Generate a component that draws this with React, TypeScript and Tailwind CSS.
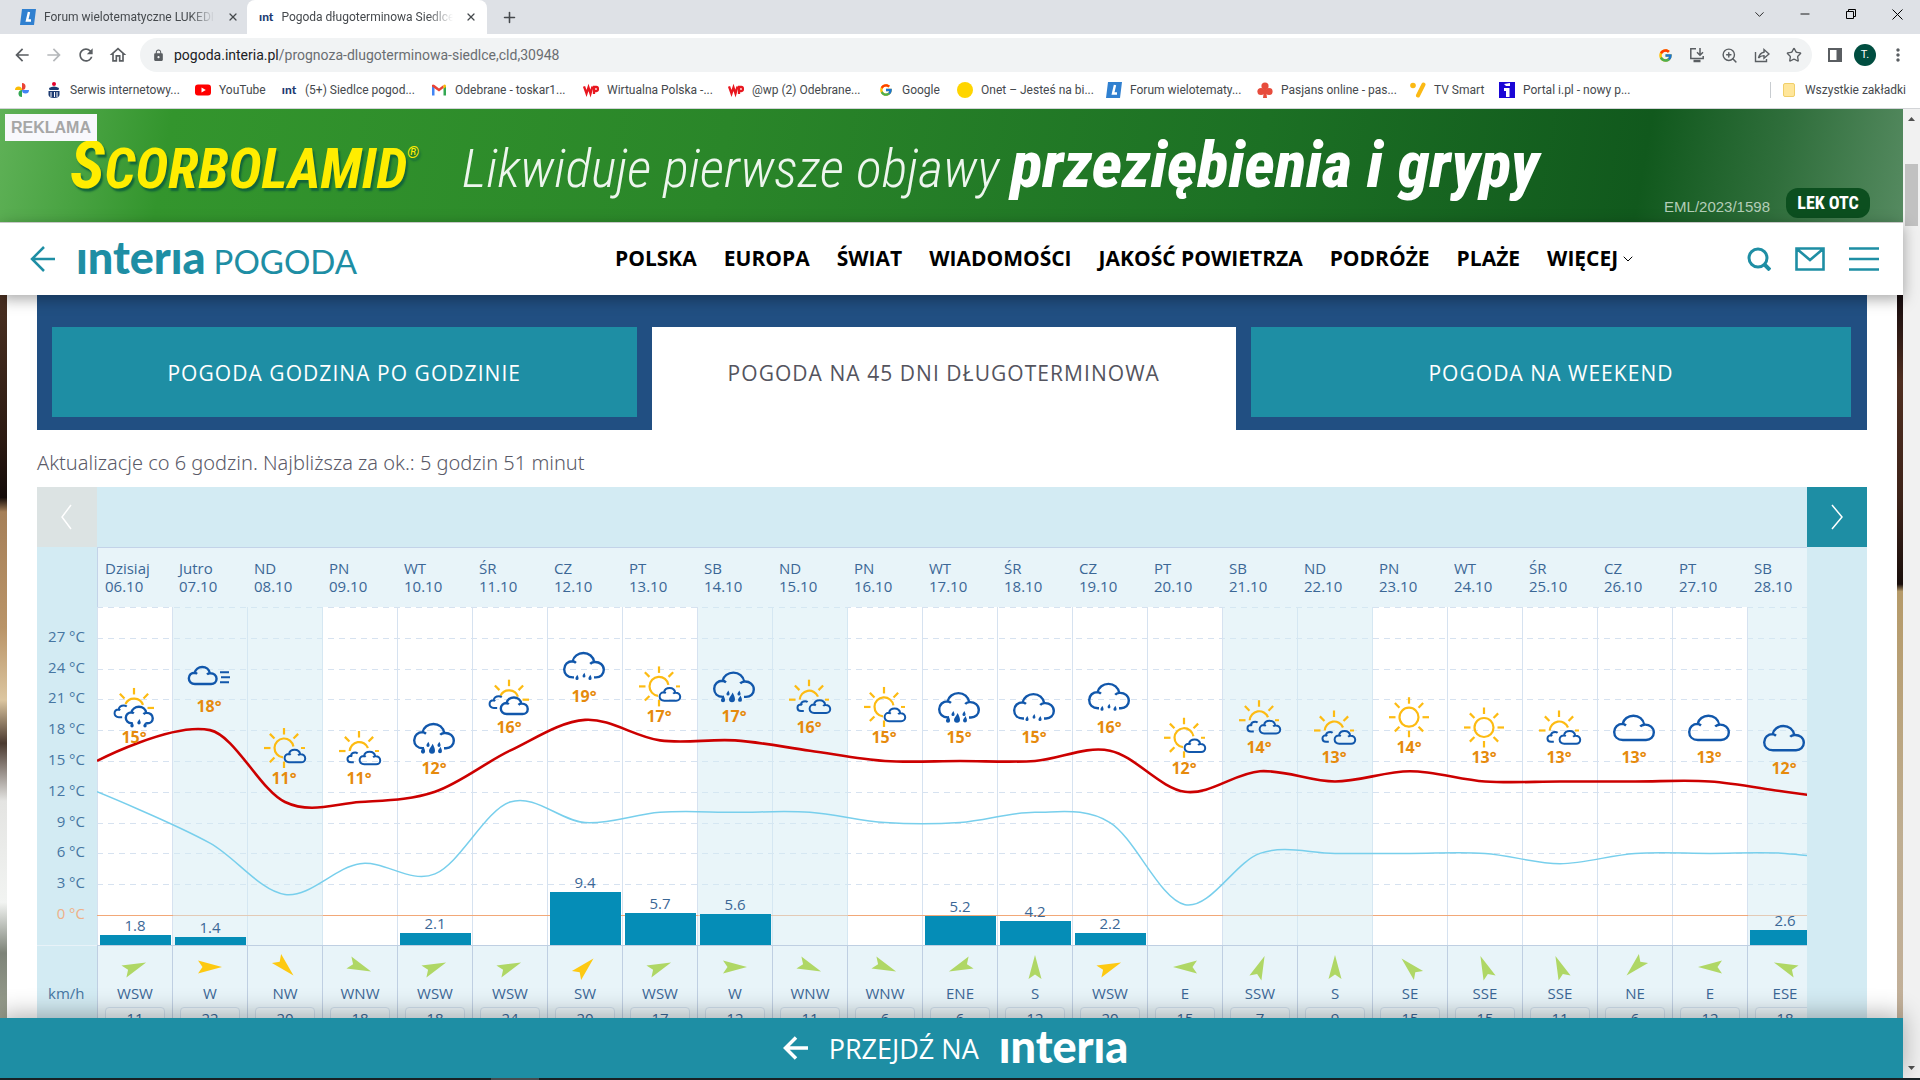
import { ChevronDown, Minus, Plus, Star, X, ZoomIn } from "lucide-react";
import { FcGoogle } from "react-icons/fc";
import { MdArrowBack, MdArrowForward, MdLock, MdMoreVert, MdOutlineHome, MdRefresh } from "react-icons/md";

type IconName =
  | "sun"
  | "sunCloud"
  | "sunSmallClouds"
  | "sunClouds"
  | "sunRain"
  | "cloud"
  | "fog"
  | "rain"
  | "heavyRain";

type Day = {
  name: string;
  date: string;
  icon: IconName;
  high: number;
  low: number;
  rain?: number;
  wind: string;
  speed: number;
  strong?: boolean;
};

const days: Day[] = [
  { name: "Dzisiaj", date: "06.10", icon: "sunRain", high: 15, low: 12, rain: 1.8, wind: "WSW", speed: 11 },
  { name: "Jutro", date: "07.10", icon: "fog", high: 18, low: 7, rain: 1.4, wind: "W", speed: 22, strong: true },
  { name: "ND", date: "08.10", icon: "sunCloud", high: 11, low: 2, wind: "NW", speed: 20, strong: true },
  { name: "PN", date: "09.10", icon: "sunSmallClouds", high: 11, low: 5, wind: "WNW", speed: 18 },
  { name: "WT", date: "10.10", icon: "heavyRain", high: 12, low: 4, rain: 2.1, wind: "WSW", speed: 18 },
  { name: "ŚR", date: "11.10", icon: "sunClouds", high: 16, low: 11, wind: "WSW", speed: 24 },
  { name: "CZ", date: "12.10", icon: "rain", high: 19, low: 9, rain: 9.4, wind: "SW", speed: 20, strong: true },
  { name: "PT", date: "13.10", icon: "sunCloud", high: 17, low: 10, rain: 5.7, wind: "WSW", speed: 17 },
  { name: "SB", date: "14.10", icon: "heavyRain", high: 17, low: 10, rain: 5.6, wind: "W", speed: 12 },
  { name: "ND", date: "15.10", icon: "sunSmallClouds", high: 16, low: 10, wind: "WNW", speed: 11 },
  { name: "PN", date: "16.10", icon: "sunCloud", high: 15, low: 9, wind: "WNW", speed: 6 },
  { name: "WT", date: "17.10", icon: "heavyRain", high: 15, low: 9, rain: 5.2, wind: "ENE", speed: 6 },
  { name: "ŚR", date: "18.10", icon: "rain", high: 15, low: 10, rain: 4.2, wind: "S", speed: 12 },
  { name: "CZ", date: "19.10", icon: "rain", high: 16, low: 9, rain: 2.2, wind: "WSW", speed: 20, strong: true },
  { name: "PT", date: "20.10", icon: "sunCloud", high: 12, low: 1, wind: "E", speed: 15 },
  { name: "SB", date: "21.10", icon: "sunSmallClouds", high: 14, low: 6, wind: "SSW", speed: 7 },
  { name: "ND", date: "22.10", icon: "sunSmallClouds", high: 13, low: 6, wind: "S", speed: 9 },
  { name: "PN", date: "23.10", icon: "sun", high: 14, low: 6, wind: "SE", speed: 15 },
  { name: "WT", date: "24.10", icon: "sun", high: 13, low: 6, wind: "SSE", speed: 15 },
  { name: "ŚR", date: "25.10", icon: "sunSmallClouds", high: 13, low: 5, wind: "SSE", speed: 11 },
  { name: "CZ", date: "26.10", icon: "cloud", high: 13, low: 6, wind: "NE", speed: 6 },
  { name: "PT", date: "27.10", icon: "cloud", high: 13, low: 6, wind: "E", speed: 12 },
  { name: "SB", date: "28.10", icon: "cloud", high: 12, low: 6, rain: 2.6, wind: "ESE", speed: 18 },
];

const windAngle: Record<string, number> = {
  S: 0, SSW: 22.5, SW: 45, WSW: 67.5, W: 90, WNW: 112.5, NW: 135,
  NE: 225, ENE: 247.5, E: 270, ESE: 292.5, SE: 315, SSE: 337.5,
};

const COL = 75;
const PLOT_W = COL * days.length;
const PLOT_H = 338;
const ZERO_Y = 308;
const DEGREE = 10.27;
const ticks = [27, 24, 21, 18, 15, 12, 9, 6, 3, 0];

const tempY = (t: number) => ZERO_Y - t * DEGREE;
const isWeekend = (day: Day, i: number) => day.name === "SB" || day.name === "ND" || i === 1;

type Point = { x: number; y: number };

function spline(points: Point[]) {
  let d = `M${points[0].x} ${points[0].y}`;
  let right: Point = points[0];
  for (let i = 1; i < points.length; i++) {
    const prev = points[i - 1];
    const cur = points[i];
    const next = points[i + 1];
    let left = cur;
    let nextRight = cur;
    if (next) {
      const lx = (2 * cur.x + prev.x) / 3;
      const ly = (2 * cur.y + prev.y) / 3;
      const rx = (2 * cur.x + next.x) / 3;
      const ry = (2 * cur.y + next.y) / 3;
      // shift both handles so they stay in line with the point
      const fix = ((ry - ly) * (rx - cur.x)) / (rx - lx) + cur.y - ry;
      left = { x: lx, y: ly + fix };
      nextRight = { x: rx, y: ry + fix };
    }
    d += ` C${right.x} ${right.y} ${left.x} ${left.y} ${cur.x} ${cur.y}`;
    right = nextRight;
  }
  return d;
}

function series(key: "high" | "low", last: number) {
  const points = days.map((day, i) => ({
    x: i === 0 ? 0 : COL * i + 38,
    y: tempY(day[key]),
  }));
  points.push({ x: COL * days.length + 38, y: tempY(last) });
  return spline(points);
}

const CLOUD =
  "M10 25.5C4.5 25.5 1.2 22 1.2 17.4C1.2 12.5 5 9.4 9.6 9.4C10.6 4.6 15 1.2 20.4 1.2C26 1.2 30.4 4.8 31.2 10.2C36.8 9.8 40.8 13.2 40.8 18C40.8 22.4 37.4 25.5 33 25.5Z M9.6 9.4Q11.4 9.6 13 11 M31.2 10.2Q28.6 10.4 27.2 12";
const OPEN_CLOUD =
  "M11 25.5H10C4.5 25.5 1.2 22 1.2 17.4C1.2 12.5 5 9.4 9.6 9.4C10.6 4.6 15 1.2 20.4 1.2C26 1.2 30.4 4.8 31.2 10.2C36.8 9.8 40.8 13.2 40.8 18C40.8 22.4 37.4 25.5 33 25.5H31 M9.6 9.4Q11.4 9.6 13 11 M31.2 10.2Q28.6 10.4 27.2 12";
const HALF_CLOUD =
  "M17 25.5H10C4.5 25.5 1.2 22 1.2 17.4C1.2 12.5 5 9.4 9.6 9.4C10.6 4.6 15 1.2 20.4 1.2Q24 1.2 26.6 3.4 M9.6 9.4Q11.4 9.6 13 11";

function Cloud({ x, y, scale = 1, d = CLOUD }: { x: number; y: number; scale?: number; d?: string }) {
  return (
    <path
      d={d}
      transform={`translate(${x} ${y}) scale(${scale})`}
      vectorEffect="non-scaling-stroke"
      fill="none"
      stroke="#1157ab"
      strokeWidth={scale < 0.6 ? 2 : 2.4}
    />
  );
}

function Drop({ x, y, size }: { x: number; y: number; size: number }) {
  return (
    <path
      transform={`translate(${x} ${y}) scale(${size})`}
      d="M.3 0C1 1.4 1.3 2.2 1.3 3A1.3 1.3 0 0 1-1.3 3C-1.3 2.1-.4 1.4.3 0Z"
      fill="#1157ab"
    />
  );
}

function Sun({ cy = 0, arc, rays }: { cy?: number; arc?: string; rays: number[] }) {
  return (
    <g transform={`translate(0 ${cy})`} fill="none" stroke="#fdbb12" strokeWidth="2.2">
      {arc ? <path d={arc} /> : <circle r="9.5" />}
      {rays.map((a) => (
        <path key={a} d="M0-13.5V-20" transform={`rotate(${a})`} />
      ))}
    </g>
  );
}

function WeatherIcon({ name }: { name: IconName }) {
  switch (name) {
    case "sun":
      return <Sun rays={[0, 45, 90, 135, 180, 225, 270, 315]} />;
    case "sunCloud":
      return (
        <>
          <Sun arc="M-1 9.4A9.5 9.5 0 1 1 9.4-1.5" rays={[0, 45, 180, 225, 270, 315]} />
          <path d="M17 0H21" stroke="#fdbb12" strokeWidth="2" />
          <Cloud x={0} y={1} scale={0.52} />
        </>
      );
    case "sunSmallClouds":
      return (
        <>
          <Sun cy={3} arc="M-9.3 0A9.5 9.5 0 0 1 9-3" rays={[0, 45, 270, 315]} />
          <path d="M16 3H20" stroke="#fdbb12" strokeWidth="2" />
          <Cloud x={-12} y={4} scale={0.4} d={HALF_CLOUD} />
          <Cloud x={0} y={3} scale={0.52} />
        </>
      );
    case "sunClouds":
      return (
        <>
          <Sun cy={3} arc="M-8.5-4A9.5 9.5 0 0 1 9-3" rays={[0, 45, 90, 315]} />
          <Cloud x={-20} y={-1} scale={0.48} d={HALF_CLOUD} />
          <Cloud x={-9} y={0} scale={0.68} />
        </>
      );
    case "sunRain":
      return (
        <>
          <Sun cy={1} arc="M-8.5-4A9.5 9.5 0 0 1 9-3" rays={[0, 45, 90, 315]} />
          <Cloud x={-20} y={-2} scale={0.48} d={HALF_CLOUD} />
          <Cloud x={-9} y={-1} scale={0.68} d={OPEN_CLOUD} />
          <Drop x={-2} y={15} size={1.3} />
          <Drop x={5} y={12} size={1.3} />
          <Drop x={11} y={15} size={1.3} />
        </>
      );
    case "fog":
      return (
        <>
          <Cloud x={-21} y={-10} scale={0.7} />
          <path d="M11-4H20 M12 1H21 M11 6H20" stroke="#1157ab" strokeWidth="2" />
        </>
      );
    case "rain":
      return (
        <>
          <Cloud x={-21} y={-14} d={OPEN_CLOUD} />
          <Drop x={-7} y={9} size={1.2} />
          <Drop x={0} y={7} size={1.1} />
          <Drop x={6} y={9} size={1.2} />
        </>
      );
    case "heavyRain":
      return (
        <>
          <Cloud x={-21} y={-15} d={OPEN_CLOUD} />
          <Drop x={-11} y={9} size={1.6} />
          <Drop x={-2} y={6} size={2.3} />
          <Drop x={6} y={9} size={1.5} />
          <Drop x={-6} y={4} size={1.2} />
          <Drop x={5} y={4} size={1.2} />
        </>
      );
    default:
      return <Cloud x={-21} y={-13} />;
  }
}

function Plot() {
  return (
    <svg
      width={PLOT_W}
      height={PLOT_H}
      className="block bg-white font-['Open_Sans',sans-serif]"
      role="img"
      aria-label="Temperatura i opady"
    >
      <g stroke="#d6e2f0">
        {days.map((day, i) => (
          <path key={day.date} d={`M${COL * i + 0.5} 0V${PLOT_H}`} />
        ))}
      </g>
      <g stroke="#d6e2f0" strokeDasharray="6 5">
        <path d={`M0 .5H${PLOT_W}`} />
        {ticks.slice(0, -1).map((t) => (
          <path key={t} d={`M0 ${Math.round(tempY(t)) + 0.5}H${PLOT_W}`} />
        ))}
      </g>
      <path d={`M0 ${ZERO_Y + 0.5}H${PLOT_W}`} stroke="#f2a878" />
      {days.map((day, i) =>
        isWeekend(day, i) ? (
          <rect key={day.date} x={COL * i + 1} y="0" width={COL} height={PLOT_H} fill="#d3ebf3" fillOpacity=".5" />
        ) : null
      )}
      <path d={series("low", 5)} fill="none" stroke="#78cfec" strokeWidth="1.5" />
      {days.map((day, i) =>
        day.rain ? (
          <rect
            key={day.date}
            x={COL * i + 3}
            y={PLOT_H - Math.round(day.rain * 5.6)}
            width="71"
            height={Math.round(day.rain * 5.6)}
            fill="#058db7"
          />
        ) : null
      )}
      <path d={series("high", 11)} fill="none" stroke="#cc0000" strokeWidth="2.6" />
      {days.map((day, i) => (
        <g key={day.date} transform={`translate(${COL * i + 37} ${tempY(day.high)})`}>
          <g transform="translate(0 -54)">
            <WeatherIcon name={day.icon} />
          </g>
          <text y="-18" textAnchor="middle" fontSize="16" fontWeight="700" fill="#e68a0c">
            {day.high}°
          </text>
        </g>
      ))}
      {days.map((day, i) =>
        day.rain ? (
          <text
            key={day.date}
            x={COL * i + 38}
            y={PLOT_H - Math.round(day.rain * 5.6) - 4}
            textAnchor="middle"
            fontSize="15"
            fill="#3b6796"
          >
            {day.rain}
          </text>
        ) : null
      )}
    </svg>
  );
}

function Axis() {
  return (
    <svg width="60" height={PLOT_H} className="block font-['Open_Sans',sans-serif]" aria-hidden="true">
      {ticks.map((t) => (
        <text
          key={t}
          x="48"
          y={Math.round(tempY(t)) + 4}
          textAnchor="end"
          fontSize="15"
          fill={t === 0 ? "#efb087" : "#4676a2"}
        >
          {t} °C
        </text>
      ))}
    </svg>
  );
}

function Forecast() {
  return (
    <section className="flex bg-[#d3ebf3]">
      <div className="w-[60px] shrink-0">
        <button className="flex h-[60px] w-full items-center justify-center bg-[#dce3e3] text-white" aria-label="Poprzednie">
          <svg width="12" height="26" fill="none" stroke="currentColor" strokeWidth="1.5">
            <path d="M10 1L1 13L10 25" />
          </svg>
        </button>
        <div className="h-[60px]" />
        <Axis />
        <div className="border-t border-[#e8f2f8] pt-[35px] pl-[11px] text-[15px] leading-6 text-[#4676a2]">km/h</div>
      </div>
      <div className="min-w-0 flex-1 overflow-hidden">
        <div className="h-[60px]" />
        <table className="w-[1725px] table-fixed border-separate border-spacing-0 text-[#3b6796]">
          <thead>
            <tr className="h-[60px] bg-[#e8f4f9]">
              {days.map((day) => (
                <th
                  key={day.date}
                  className="border-t border-[#c3d3e8] pb-0.5 pl-[7px] text-left align-middle text-[15px] leading-[18px] font-normal first:border-l"
                >
                  {day.name}
                  <br />
                  {day.date}
                </th>
              ))}
            </tr>
          </thead>
          <tbody>
            <tr>
              <td colSpan={days.length} className="p-0">
                <Plot />
              </td>
            </tr>
            <tr className="bg-[#e8f4f9]">
              {days.map((day) => (
                <td key={day.date} className="border-t border-l border-[#bfcfe2] p-0 text-center align-top">
                  <svg width="28" height="28" viewBox="-14 -14 28 28" className="mx-auto mt-[7px]">
                    <path
                      d="M0-12L6.5 12L0 7.5L-6.5 12Z"
                      transform={`rotate(${windAngle[day.wind]})`}
                      fill={day.strong ? "#fdc912" : "#afd765"}
                    />
                  </svg>
                  <div className="text-[15px] leading-6">{day.wind}</div>
                  <div className="mx-[7px] mt-0.5 h-10 rounded border border-[#cfdfec] bg-[#edf6fa] text-[15px] leading-5">
                    {day.speed}
                  </div>
                </td>
              ))}
            </tr>
          </tbody>
        </table>
      </div>
      <div className="w-[60px] shrink-0">
        <button className="flex h-[60px] w-full items-center justify-center bg-[#1e8ea4] text-white" aria-label="Następne">
          <svg width="12" height="26" fill="none" stroke="currentColor" strokeWidth="1.5">
            <path d="M1 1L11 13L1 25" />
          </svg>
        </button>
      </div>
    </section>
  );
}

function IntIcon() {
  return <span className="font-['Lato',sans-serif] text-[12px] leading-4 font-black text-[#1d3b72]">ınt</span>;
}

function ForumIcon() {
  return (
    <svg width="16" height="16" viewBox="0 0 16 16" className="shrink-0">
      <path d="M2 0H16L14 16H0Z" fill="#3080d0" />
      <path d="M9 3L7 11.5H11" fill="none" stroke="#fff" strokeWidth="2.4" />
    </svg>
  );
}

function PhotosIcon() {
  return (
    <svg width="16" height="16" viewBox="0 0 16 16">
      <path d="M8 8V1A3.5 3.5 0 0 1 8 8Z" fill="#ea4335" />
      <path d="M8 8H15A3.5 3.5 0 0 1 8 8Z" fill="#4285f4" />
      <path d="M8 8V15A3.5 3.5 0 0 1 8 8Z" fill="#34a853" />
      <path d="M8 8H1A3.5 3.5 0 0 1 8 8Z" fill="#fbbc04" />
    </svg>
  );
}

function PkoIcon() {
  return (
    <svg width="16" height="16" viewBox="0 0 16 16">
      <circle cx="8" cy="2" r="2" fill="#e4002b" />
      <path d="M3 6Q8 3 13 6L12.5 8H3.5Z M2.5 9H13.5V13Q13 16 8 16T2.5 13Z" fill="#1d3b72" />
      <path d="M5 10V15 M8.5 10V15 M11 10V15" stroke="#fff" />
    </svg>
  );
}

function YoutubeIcon() {
  return (
    <svg width="16" height="16" viewBox="0 0 16 16">
      <rect y="2.5" width="16" height="11" rx="3" fill="#f00" />
      <path d="M6.5 5.5V10.5L10.8 8Z" fill="#fff" />
    </svg>
  );
}

function GmailIcon() {
  return (
    <svg width="16" height="16" viewBox="0 0 16 16">
      <path d="M1 3.5L3.5 5V13.5H1Z" fill="#4285f4" />
      <path d="M15 3.5L12.5 5V13.5H15Z" fill="#34a853" />
      <path d="M1 3Q2 2 3.5 3L8 6.5L12.5 3V6L8 9.5L1 4.5Z" fill="#ea4335" />
      <path d="M12.5 3Q14 2 15 3.5V5L12.5 6.8Z" fill="#fbbc04" />
    </svg>
  );
}

function WpIcon() {
  return (
    <svg width="16" height="16" viewBox="0 0 16 16" fill="none" stroke="#e8171f" strokeWidth="2.3">
      <path d="M1 4.5L3.5 11.5L5.5 5.5L7.5 11.5L9.5 4.5" />
      <path d="M11 12V5H13.5Q15 5 15 7T13.5 9H11" />
    </svg>
  );
}

function ClubIcon() {
  return (
    <svg width="16" height="16" viewBox="0 0 16 16" fill="#e74c3c">
      <circle cx="8" cy="4" r="3.6" />
      <circle cx="4" cy="9.5" r="3.6" />
      <circle cx="12" cy="9.5" r="3.6" />
      <path d="M7.2 6H8.8L10 16H6Z" />
    </svg>
  );
}

function TvIcon() {
  return (
    <svg width="16" height="16" viewBox="0 0 16 16">
      <circle cx="3" cy="3.5" r="2.8" fill="#fbb914" />
      <path d="M13.5 2.5L8 13.5" stroke="#fbb914" strokeWidth="4" strokeLinecap="round" />
    </svg>
  );
}

function PortalIcon() {
  return (
    <svg width="16" height="16" viewBox="0 0 16 16">
      <path d="M0 0H16V16H0Z" fill="#1a06d6" />
      <path d="M5 2L11 1V4H7Z M5 6H10.5V15H7V9H5Z" fill="#fff" />
    </svg>
  );
}

const bookmarks = [
  { label: "Serwis internetowy...", icon: <PkoIcon />, width: "w-[149px]" },
  { label: "YouTube", icon: <YoutubeIcon />, width: "w-[86px]" },
  { label: "(5+) Siedlce pogod...", icon: <IntIcon />, width: "w-[150px]" },
  { label: "Odebrane - toskar1...", icon: <GmailIcon />, width: "w-[152px]" },
  { label: "Wirtualna Polska -...", icon: <WpIcon />, width: "w-[145px]" },
  { label: "@wp (2) Odebrane...", icon: <WpIcon />, width: "w-[150px]" },
  { label: "Google", icon: <FcGoogle size={14} />, width: "w-[79px]" },
  { label: "Onet – Jesteś na bi...", icon: <span className="size-4 rounded-full bg-[#ffd500]" />, width: "w-[149px]" },
  { label: "Forum wielotematy...", icon: <ForumIcon />, width: "w-[151px]" },
  { label: "Pasjans online - pas...", icon: <ClubIcon />, width: "w-[153px]" },
  { label: "TV Smart", icon: <TvIcon />, width: "w-[89px]" },
  { label: "Portal i.pl - nowy p...", icon: <PortalIcon />, width: "w-[150px]" },
];

function BrowserChrome() {
  return (
    <div className="shrink-0 border-b border-[#d2d4d7] bg-white font-['Roboto',sans-serif] text-[12px] text-[#45494d]">
      <div className="flex h-[34px] bg-[#dee1e6]">
        <div className="flex w-[247px] items-center gap-2 pr-2 pl-5">
          <ForumIcon />
          <span className="w-[172px] overflow-hidden mask-r-from-85% whitespace-nowrap">Forum wielotematyczne LUKEDIR</span>
          <button className="ml-1" aria-label="Zamknij kartę">
            <X size={12} strokeWidth={2.5} />
          </button>
        </div>
        <div className="flex w-[240px] items-center gap-2 rounded-t-lg bg-white pr-2 pl-3">
          <IntIcon />
          <span className="w-[172px] overflow-hidden mask-r-from-85% whitespace-nowrap">Pogoda długoterminowa Siedlce</span>
          <button className="ml-1" aria-label="Zamknij kartę">
            <X size={12} strokeWidth={2.5} />
          </button>
        </div>
        <button className="ml-3.5" aria-label="Nowa karta">
          <Plus size={17} strokeWidth={2.2} />
        </button>
        <div className="ml-auto flex h-7 text-black">
          <button className="flex w-[46px] items-center justify-center" aria-label="Szukaj kart">
            <ChevronDown size={15} strokeWidth={1.3} />
          </button>
          <button className="flex w-[46px] items-center justify-center" aria-label="Minimalizuj">
            <Minus size={14} strokeWidth={1.5} />
          </button>
          <button className="flex w-[46px] items-center justify-center" aria-label="Przywróć">
            <svg width="10" height="10" fill="none" stroke="currentColor">
              <path d="M.5 2.5H7.5V9.5H.5Z M2.5 2.5V.5H9.5V7.5H7.5" />
            </svg>
          </button>
          <button className="flex w-[46px] items-center justify-center" aria-label="Zamknij">
            <svg width="11" height="11" fill="none" stroke="currentColor">
              <path d="M.5 .5L10.5 10.5M10.5 .5L.5 10.5" />
            </svg>
          </button>
        </div>
      </div>
      <div className="flex h-[42px] items-center pr-3 pl-3 text-[#5a5e62]">
        <div className="flex w-32 items-center gap-3">
          <button aria-label="Wstecz"><MdArrowBack size={20} /></button>
          <button className="text-[#b5b8bb]" aria-label="Dalej"><MdArrowForward size={20} /></button>
          <button aria-label="Odśwież"><MdRefresh size={20} /></button>
          <button aria-label="Strona główna"><MdOutlineHome size={20} /></button>
        </div>
        <div className="flex h-[34px] flex-1 items-center rounded-full bg-[#f1f3f4] pr-2.5 pl-3">
          <MdLock size={13} />
          <a href="#" className="ml-[9px] text-sm text-[#6a6e72]">
            <span className="text-[#202124]">pogoda.interia.pl</span>/prognoza-dlugoterminowa-siedlce,cld,30948
          </a>
          <div className="ml-auto flex items-center gap-4">
            <FcGoogle size={15} />
            <svg width="16" height="16" fill="none" stroke="currentColor" strokeWidth="1.5">
              <path d="M7 1.8H1.8V11.5H14.2V9" />
              <path d="M4.5 14H11.5" strokeWidth="2.5" />
              <path d="M11 1V8 M8 5.2L11 8.2L14 5.2" />
            </svg>
            <ZoomIn size={17} />
            <svg width="16" height="16" fill="none" stroke="currentColor" strokeWidth="1.4">
              <path d="M1.5 5V14.5H12.5V12" />
              <path d="M10 5.2V2.5L15 7L10 11.3V8.6Q6.5 8.6 4.5 11Q5.5 6 10 5.2Z" />
            </svg>
            <Star size={16} />
          </div>
        </div>
        <div className="ml-4 flex items-center gap-3">
          <svg width="14" height="14">
            <path d="M1 1H13V13H1Z" fill="none" stroke="currentColor" strokeWidth="2" />
            <path d="M8.5 1H13V13H8.5Z" fill="currentColor" />
          </svg>
          <button className="size-[22px] rounded-full bg-[#004d40] text-[11px] text-white">T.</button>
          <button aria-label="Menu"><MdMoreVert size={20} /></button>
        </div>
      </div>
      <nav className="mb-1 flex h-7 items-center px-3.5">
        <a href="#" className="w-8" aria-label="Zdjęcia"><PhotosIcon /></a>
        {bookmarks.map((b) => (
          <a key={b.label} href="#" className={`flex shrink-0 items-center gap-2 whitespace-nowrap ${b.width}`}>
            <span className="flex w-4 justify-center">{b.icon}</span>
            {b.label}
          </a>
        ))}
        <a href="#" className="ml-auto flex h-4 items-center gap-2.5 border-l border-[#c8ccd0] pl-3 whitespace-nowrap">
          <span className="h-3.5 w-3 rounded-xs border border-[#f0cf6a] bg-[#ffe69a]" />
          Wszystkie zakładki
        </a>
      </nav>
    </div>
  );
}

function Banner() {
  return (
    <a
      href="#"
      className="relative flex h-[113px] shrink-0 items-center overflow-hidden bg-[linear-gradient(100deg,#5fb157_0%,#33952d_9%,#2a8629_38%,#1c7024_66%,#11591d_86%,#2f6e3b_93%,#558a60_100%)] pl-[70px] font-['Roboto_Condensed',sans-serif] whitespace-nowrap"
    >
      <span className="flex w-[392px] items-baseline text-[56px] leading-none font-bold text-[#ffed00] italic [text-shadow:2px_3px_2px_#12643a]">
        <span className="text-[66px]">S</span>CORBOLAMID
        <span className="self-start pt-3 text-base leading-none font-normal">®</span>
      </span>
      <span className="flex items-baseline gap-3 italic">
        <span className="text-[54px] leading-none font-light text-[#eef6ee]">Likwiduje pierwsze objawy</span>
        <span className="text-[65px] leading-none font-extrabold text-white">przeziębienia i grypy</span>
      </span>
      <span className="absolute top-[5px] left-[5px] flex h-[27px] items-center bg-[#f8f8fc] px-1.5 font-['Liberation_Sans',sans-serif] text-base font-bold text-[#a6a6a6]">
        REKLAMA
      </span>
      <span className="absolute right-[33px] bottom-1 flex items-end gap-4">
        <span className="font-['Liberation_Sans',sans-serif] text-[15px] text-[#b4cdb8]">EML/2023/1598</span>
        <b className="flex h-[30px] w-[84px] items-center justify-center rounded-xl bg-[#0c4f1f] text-lg text-white">LEK OTC</b>
      </span>
    </a>
  );
}

const menu = ["POLSKA", "EUROPA", "ŚWIAT", "WIADOMOŚCI", "JAKOŚĆ POWIETRZA", "PODRÓŻE", "PLAŻE"];

function SiteHeader() {
  return (
    <header className="z-10 flex h-[73px] shrink-0 items-center border-t border-[#c8c8c8] bg-white pr-6 pl-[30px] shadow-[0_4px_14px_rgba(0,0,0,0.35)]">
      <div className="flex w-[585px] items-center text-[#1e8ea4]">
        <a href="#" aria-label="Wróć">
          <svg width="26" height="26" fill="none" stroke="currentColor" strokeWidth="2.5">
            <path d="M25 13H2M14 1L2 13L14 25" />
          </svg>
        </a>
        <a href="#" className="ml-5 flex items-baseline gap-2 pb-1 font-['Lato',sans-serif] leading-none">
          <span className="text-[45px] font-black">ınterıa</span>
          <span className="text-[33px]">POGODA</span>
        </a>
      </div>
      <nav className="flex items-center gap-[27px] text-[21px] font-bold whitespace-nowrap text-black">
        {menu.map((item) => (
          <a key={item} href="#">{item}</a>
        ))}
        <button className="flex items-center gap-0.5">
          WIĘCEJ <ChevronDown size={16} strokeWidth={1.5} />
        </button>
      </nav>
      <div className="ml-auto flex items-center gap-6 text-[#1e8ea4]">
        <button aria-label="Szukaj">
          <svg width="24" height="24" fill="none" stroke="currentColor" strokeWidth="3">
            <circle cx="11" cy="11" r="9" />
            <path d="M17 17L23 23" strokeWidth="4" />
          </svg>
        </button>
        <a href="#" aria-label="Poczta">
          <svg width="30" height="24" fill="none" stroke="currentColor" strokeWidth="2.6">
            <path d="M1.5 1.5H28.5V22.5H1.5Z M2 2L15 13L28 2" />
          </svg>
        </a>
        <button aria-label="Menu">
          <svg width="30" height="24" stroke="currentColor" strokeWidth="2.6">
            <path d="M0 1.5H30M0 12H30M0 22.5H30" />
          </svg>
        </button>
      </div>
    </header>
  );
}

function Tabs() {
  return (
    <nav className="flex h-[135px] bg-[#214f82] pt-8 pl-[15px] text-[21px] tracking-wider">
      <a href="#" className="mr-[15px] mb-[13px] flex flex-1 items-center justify-center bg-[#1e8ea4] pt-1 text-white">
        POGODA GODZINA PO GODZINIE
      </a>
      <a href="#" className="flex flex-1 items-center justify-center bg-white pt-1 pb-[13px] text-[#54545e]">
        POGODA NA 45 DNI DŁUGOTERMINOWA
      </a>
      <a href="#" className="mr-4 mb-[13px] ml-[15px] flex w-[600px] items-center justify-center bg-[#1e8ea4] pt-1 text-white">
        POGODA NA WEEKEND
      </a>
    </nav>
  );
}

export default function App() {
  return (
    <div className="flex h-screen flex-col overflow-hidden font-['Open_Sans',sans-serif]">
      <BrowserChrome />
      <div className="flex min-h-0 flex-1">
        <div className="flex min-w-0 flex-1 flex-col">
          <Banner />
          <SiteHeader />
          <div className="flex min-h-0 flex-1 overflow-hidden">
            <div className="w-[7px] shrink-0 bg-[linear-gradient(#4a3022,#2c1a12_20%,#150c09_28%,#a57f58_30%,#b99468_46%,#dcc6a0_56%,#4b3a30_62%,#e4e4e2_70%,#f2f4f2_84%,#7d8378_91%,#9aa08f_100%)]" />
            <main className="min-w-0 flex-1 px-[30px]">
              <Tabs />
              <p className="pt-[22px] pb-3.5 font-['Noto_Sans',sans-serif] text-xl leading-[21px] font-light text-[#5a5a68]">
                Aktualizacje co 6 godzin. Najbliższa za ok.: 5 godzin 51 minut
              </p>
              <Forecast />
            </main>
            <div className="w-1.5 shrink-0 bg-[linear-gradient(#150b0d,#4f2e20_12%,#3d2319_28%,#1a0f0c_40%,#b59a69_41%,#bfae92_75%,#c2b09a_100%)]" />
          </div>
          <a
            href="#"
            className="z-10 flex h-[60px] shrink-0 items-center justify-center gap-5 bg-[#1e8ea4] pl-2 text-[27px] text-white shadow-[0_-4px_24px_rgba(0,0,0,0.3)]"
          >
            <svg width="26" height="24" fill="none" stroke="currentColor" strokeWidth="3.5">
              <path d="M25 12H3M13 1.5L2.5 12L13 22.5" />
            </svg>
            <span className="pt-0.5">PRZEJDŹ NA</span>
            <span className="pb-1 font-['Lato',sans-serif] text-[45px] leading-none font-black">ınterıa</span>
          </a>
        </div>
        <div className="flex w-[17px] shrink-0 flex-col items-center bg-[#f1f1f1]">
          <svg width="7" height="4" className="mt-2">
            <path d="M0 4L3.5 0L7 4Z" fill="#505050" />
          </svg>
          <div className="mt-[43px] h-[62px] w-[13px] bg-[#c1c1c1]" />
          <svg width="7" height="4" className="mt-auto mb-2">
            <path d="M0 0L3.5 4L7 0Z" fill="#505050" />
          </svg>
        </div>
      </div>
      <div className="h-0.5 shrink-0 bg-[#1b2529] pl-[491px]">
        <div className="h-full w-12 bg-[#4d5559]" />
      </div>
    </div>
  );
}
